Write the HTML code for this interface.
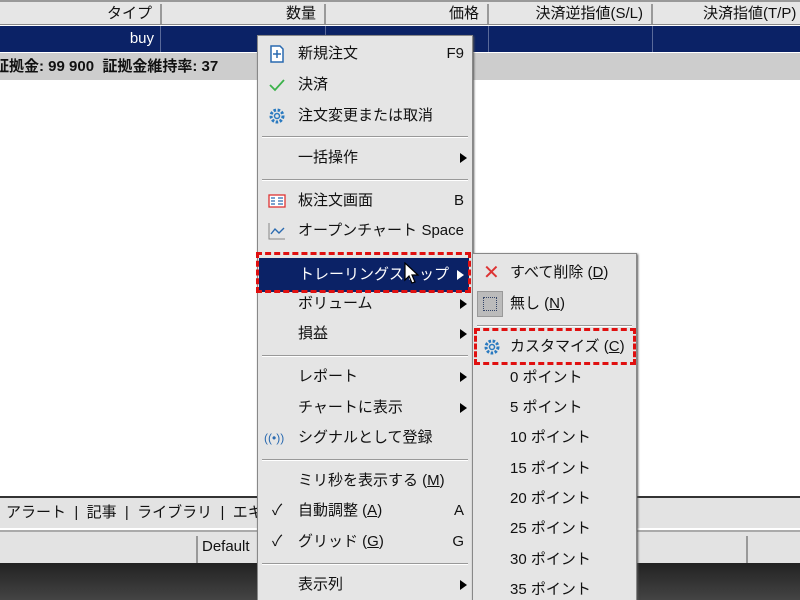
<!DOCTYPE html>
<html style="width:800px;height:600px;overflow:hidden"><head><meta charset="utf-8"><style>
*{margin:0;padding:0;box-sizing:border-box}
body{width:800px;height:600px;overflow:hidden;position:relative;background:#fff;font-family:"Liberation Sans","Noto Sans CJK JP",sans-serif;font-size:15px;color:#111}
.a{position:absolute}
.hdr{top:0;left:0;width:800px;height:25px;background:#e6e6e6;border-top:2px solid #999;border-bottom:1px solid #888}
.hc{position:absolute;top:2px;height:20px;text-align:right;border-right:2px solid #999;padding-right:8px;line-height:20px}
.sel{top:26px;left:0;width:800px;height:26px;background:#0b2266}
.gray{top:53px;left:0;width:800px;height:27px;background:#cdcdcd;font-weight:bold;line-height:27px;font-size:15px}
.tabs{top:496px;left:0;width:800px;height:32px;background:#e3e3e3;border-top:2px solid #333;line-height:30px}
.stat{top:530px;left:0;width:800px;height:33px;background:#e3e3e3;border-top:2px solid #aaa}
.dark{top:563px;left:0;width:800px;height:37px;background:linear-gradient(#222,#444)}
.menu{background:#e5e5e5;border:1px solid #888;box-shadow:1px 1px 2px #555}
.it{position:absolute;left:0;right:0;height:30px;line-height:30px}
.it .t{position:absolute;left:40px}
.it .k{position:absolute;right:8px}
.arr{position:absolute;right:5px;top:10px;width:0;height:0;border-left:7px solid #000;border-top:5px solid transparent;border-bottom:5px solid transparent}
.sep{position:absolute;left:4px;right:4px;height:2px;border-top:1px solid #999;border-bottom:1px solid #fff}
.ic{position:absolute;left:10px;top:6px;width:18px;height:18px}
</style></head><body>
<div class="a hdr">
<div class="hc" style="left:0;width:162px">タイプ</div>
<div class="hc" style="left:162px;width:164px">数量</div>
<div class="hc" style="left:326px;width:163px">価格</div>
<div class="hc" style="left:489px;width:164px">決済逆指値(S/L)</div>
<div class="hc" style="left:653px;width:160px;text-align:left;padding-left:50px">決済指値(T/P)</div>
</div>
<div class="a sel">
<div class="a" style="left:0;width:161px;height:26px;border-right:1px solid #5a6a9a;color:#fff;text-align:right;padding-right:6px;line-height:26px">buy</div>
<div class="a" style="left:325px;top:0;height:26px;border-left:1px solid #5a6a9a"></div>
<div class="a" style="left:488px;top:0;height:26px;border-left:1px solid #5a6a9a"></div>
<div class="a" style="left:652px;top:0;height:26px;border-left:1px solid #5a6a9a"></div>
</div>
<div class="a gray"><span style="margin-left:-6px">証拠金: 99 900 &nbsp;証拠金維持率: 37</span></div>
<div class="a tabs"><span style="margin-left:6px">アラート &nbsp;|&nbsp; 記事 &nbsp;|&nbsp; ライブラリ &nbsp;|&nbsp; エキスパート</span></div>
<div class="a stat"><div class="a" style="left:196px;top:4px;height:28px;border-left:2px solid #999"></div><div class="a" style="left:202px;top:6px">Default</div><div class="a" style="left:746px;top:4px;height:28px;border-left:2px solid #999"></div></div>
<div class="a dark"></div>

<div class="a menu" style="left:257px;top:35px;width:216px;height:570px">
<div class="it" style="top:3px"><svg class="ic" viewBox="0 0 18 18"><path d="M3 1h9l3 3v13H3z" fill="#fff" stroke="#2a6ab0" stroke-width="1.5"/><path d="M9 5v8M5 9h8" stroke="#2a6ab0" stroke-width="1.5"/></svg><span class="t">新規注文</span><span class="k">F9</span></div>
<div class="it" style="top:34px"><svg class="ic" viewBox="0 0 18 18"><path d="M2 9l5 5 9-10" fill="none" stroke="#3bb24a" stroke-width="1.8"/></svg><span class="t">決済</span></div>
<div class="it" style="top:65px"><svg class="ic" viewBox="0 0 18 18"><circle cx="9" cy="9" r="6" fill="none" stroke="#2a7ac0" stroke-width="3" stroke-dasharray="2.5 1.6"/><circle cx="9" cy="9" r="2.5" fill="none" stroke="#2a7ac0" stroke-width="1.5"/></svg><span class="t">注文変更または取消</span></div>
<div class="sep" style="top:100px"></div>
<div class="it" style="top:107px"><span class="t">一括操作</span><span class="arr"></span></div>
<div class="sep" style="top:143px"></div>
<div class="it" style="top:150px"><svg class="ic" viewBox="0 0 18 18"><rect x="1" y="3" width="16" height="12" fill="#fff" stroke="#d33" stroke-width="1.3"/><path d="M3 6h4M3 9h4M3 12h4M10 6h5M10 9h5M10 12h5" stroke="#2a6ab0" stroke-width="1.3"/></svg><span class="t">板注文画面</span><span class="k">B</span></div>
<div class="it" style="top:180px"><svg class="ic" viewBox="0 0 18 18"><path d="M1 1v16h16" fill="none" stroke="#888"/><path d="M3 12l4-5 4 4 5-5" fill="none" stroke="#2a6ab0" stroke-width="1.4"/></svg><span class="t">オープンチャート</span><span class="k">Space</span></div>
<div class="it" style="top:222px;left:1px;right:3px;height:34px;line-height:34px;background:#0b2266;color:#fff"><span class="t">トレーリングストップ</span><span class="arr" style="border-left-color:#fff;top:12px"></span></div>
<div class="it" style="top:253px"><span class="t">ボリューム</span><span class="arr"></span></div>
<div class="it" style="top:283px"><span class="t">損益</span><span class="arr"></span></div>
<div class="sep" style="top:319px"></div>
<div class="it" style="top:326px"><span class="t">レポート</span><span class="arr"></span></div>
<div class="it" style="top:357px"><span class="t">チャートに表示</span><span class="arr"></span></div>
<div class="it" style="top:387px"><span class="ic" style="color:#2a6ab0;font-size:12px;left:6px;top:0;width:auto">((•))</span><span class="t">シグナルとして登録</span></div>
<div class="sep" style="top:423px"></div>
<div class="it" style="top:430px"><span class="t">ミリ秒を表示する (<u>M</u>)</span></div>
<div class="it" style="top:460px"><span class="ic" style="top:0;left:14px">✓</span><span class="t">自動調整 (<u>A</u>)</span><span class="k">A</span></div>
<div class="it" style="top:491px"><span class="ic" style="top:0;left:14px">✓</span><span class="t">グリッド (<u>G</u>)</span><span class="k">G</span></div>
<div class="sep" style="top:527px"></div>
<div class="it" style="top:534px"><span class="t">表示列</span><span class="arr"></span></div>
</div>
<div class="a" style="left:256px;top:252px;width:215px;height:41px;border:3px dashed #e01010"></div>

<div class="a menu" style="left:472px;top:253px;width:165px;height:360px">
<div class="it" style="top:4px"><span class="ic" style="top:0;left:10px;color:#d33;font-size:20px">✕</span><span class="t" style="left:37px">すべて削除 (<u>D</u>)</span></div>
<div class="it" style="top:35px"><span class="ic" style="left:4px;top:2px;width:26px;height:26px;background:#bbb;border:1px solid #999"><span style="position:absolute;left:5px;top:5px;width:14px;height:14px;border:1px dotted #346"></span></span><span class="t" style="left:37px">無し (<u>N</u>)</span></div>
<div class="sep" style="top:71px"></div>
<div class="it" style="top:78px"><svg class="ic" viewBox="0 0 18 18"><circle cx="9" cy="9" r="6" fill="none" stroke="#2a7ac0" stroke-width="3" stroke-dasharray="2.5 1.6"/><circle cx="9" cy="9" r="2.5" fill="none" stroke="#2a7ac0" stroke-width="1.5"/></svg><span class="t" style="left:37px">カスタマイズ (<u>C</u>)</span></div>
<div class="it" style="top:109px"><span class="t" style="left:37px">0 ポイント</span></div>
<div class="it" style="top:139px"><span class="t" style="left:37px">5 ポイント</span></div>
<div class="it" style="top:169px"><span class="t" style="left:37px">10 ポイント</span></div>
<div class="it" style="top:200px"><span class="t" style="left:37px">15 ポイント</span></div>
<div class="it" style="top:230px"><span class="t" style="left:37px">20 ポイント</span></div>
<div class="it" style="top:260px"><span class="t" style="left:37px">25 ポイント</span></div>
<div class="it" style="top:291px"><span class="t" style="left:37px">30 ポイント</span></div>
<div class="it" style="top:321px"><span class="t" style="left:37px">35 ポイント</span></div>
</div>
<div class="a" style="left:474px;top:328px;width:162px;height:37px;border:3px dashed #e01010"></div>
<svg class="a" style="left:404px;top:262px" width="16" height="24" viewBox="0 0 16 24"><path d="M1 1v17l4-4 3 7 3-1-3-7h6z" fill="#fff" stroke="#000" stroke-width="1.2"/></svg>
</body></html>
